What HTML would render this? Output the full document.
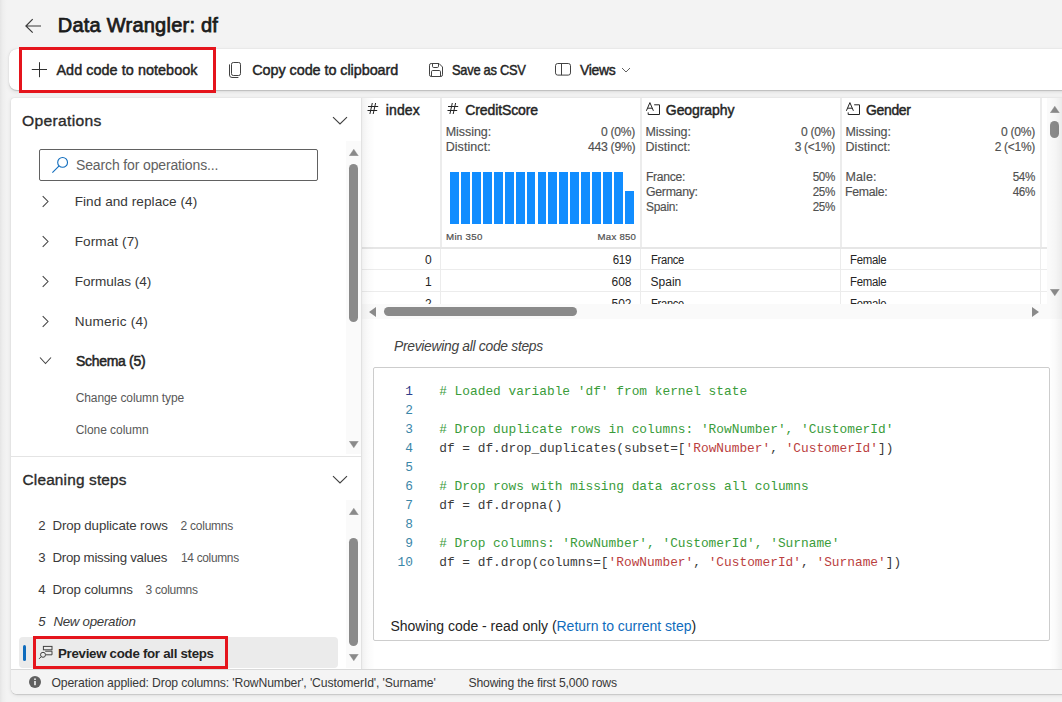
<!DOCTYPE html>
<html><head><meta charset="utf-8"><style>
html,body{margin:0;padding:0}
body{width:1062px;height:702px;overflow:hidden;position:relative;background:#f3f3f3;font-family:"Liberation Sans",sans-serif}
.t{position:absolute;white-space:pre;line-height:1}
</style></head><body>
<div style="position:absolute;left:0px;top:0px;width:7px;height:702px;background:linear-gradient(90deg,rgba(0,0,0,0.06),rgba(0,0,0,0.02) 40%,rgba(0,0,0,0))"></div>
<svg style="position:absolute;left:24px;top:17px" width="18" height="18" viewBox="0 0 18 18"><path d="M2 9H17M8.7 2.2L1.9 9L8.7 15.6" fill="none" stroke="#3a3a3a" stroke-width="1.2"/></svg>
<div class="t" style="left:57.77px;top:15.27px;font-size:20px;font-weight:400;font-style:normal;color:#1b1b1b;font-family:'Liberation Sans',sans-serif;letter-spacing:0.234px;-webkit-text-stroke:0.75px #1b1b1b;">Data Wrangler: df</div>
<div style="position:absolute;left:9px;top:49px;width:1071px;height:41px;background:#fff;border-radius:8px;box-shadow:0 0.5px 1px rgba(0,0,0,0.16),0 1.5px 4px rgba(0,0,0,0.09),0 0 1px rgba(0,0,0,0.06)"></div>
<svg style="position:absolute;left:31px;top:62px" width="16" height="16" viewBox="0 0 16 16"><path d="M8.5 0.2V15.2M0.8 7.5H16" stroke="#303030" stroke-width="1" fill="none"/></svg>
<div class="t" style="left:56.43px;top:62.81px;font-size:14.4px;font-weight:400;font-style:normal;color:#242424;font-family:'Liberation Sans',sans-serif;letter-spacing:0.054px;-webkit-text-stroke:0.45px #242424;">Add code to notebook</div>
<svg style="position:absolute;left:228px;top:61px" width="16" height="18" viewBox="0 0 16 18"><rect x="3.5" y="1.5" width="9" height="13" rx="1.8" fill="none" stroke="#424242" stroke-width="1"/><path d="M1.5 3.4V14Q1.5 16.5 4 16.5H10.4" fill="none" stroke="#424242" stroke-width="1"/></svg>
<div class="t" style="left:252.22px;top:62.81px;font-size:14.4px;font-weight:400;font-style:normal;color:#242424;font-family:'Liberation Sans',sans-serif;letter-spacing:-0.054px;-webkit-text-stroke:0.45px #242424;">Copy code to clipboard</div>
<svg style="position:absolute;left:428px;top:62px" width="16" height="16" viewBox="0 0 16 16"><path d="M3.2 1.5H11L14.5 5V12.8Q14.5 14.5 12.8 14.5H3.2Q1.5 14.5 1.5 12.8V3.2Q1.5 1.5 3.2 1.5Z" fill="none" stroke="#424242" stroke-width="1"/><path d="M4.5 1.5V4.3Q4.5 5.5 5.7 5.5H9.3Q10.5 5.5 10.5 4.3V1.5" fill="none" stroke="#424242" stroke-width="1"/><path d="M3.5 14.5V9.7Q3.5 8.5 4.7 8.5H11.3Q12.5 8.5 12.5 9.7V14.5" fill="none" stroke="#424242" stroke-width="1"/></svg>
<div class="t" style="left:452.20px;top:62.81px;font-size:14.4px;font-weight:400;font-style:normal;color:#242424;font-family:'Liberation Sans',sans-serif;letter-spacing:-0.300px;-webkit-text-stroke:0.45px #242424;transform:scaleX(0.8953);transform-origin:0 0;">Save as CSV</div>
<svg style="position:absolute;left:554px;top:62px" width="18" height="15" viewBox="0 0 18 15"><rect x="1.5" y="1.5" width="15" height="11.6" rx="2.2" fill="none" stroke="#424242" stroke-width="1"/><path d="M7.5 1.5V13.1" stroke="#424242" stroke-width="1"/></svg>
<div class="t" style="left:579.92px;top:62.81px;font-size:14.4px;font-weight:400;font-style:normal;color:#242424;font-family:'Liberation Sans',sans-serif;letter-spacing:-0.300px;-webkit-text-stroke:0.45px #242424;transform:scaleX(0.9682);transform-origin:0 0;">Views</div>
<svg style="position:absolute;left:621px;top:67px" width="10" height="6" viewBox="0 0 10 6"><path d="M1 1L5 5L9 1" fill="none" stroke="#616161" stroke-width="1"/></svg>
<div style="position:absolute;left:19px;top:47px;width:197px;height:46px;border:3px solid #e5141c;box-sizing:border-box"></div>
<div style="position:absolute;left:11px;top:98px;width:1069px;height:596px;background:#fff;border-radius:3px 3px 6px 6px;box-shadow:0 0.5px 1px rgba(0,0,0,0.12),0 1px 4px rgba(0,0,0,0.10),0 0 1px rgba(0,0,0,0.08)"></div>
<div class="t" style="left:22.18px;top:113.26px;font-size:15.4px;font-weight:400;font-style:normal;color:#2b2b2b;font-family:'Liberation Sans',sans-serif;letter-spacing:0.300px;-webkit-text-stroke:0.35px #2b2b2b;transform:scaleX(1.0173);transform-origin:0 0;">Operations</div>
<svg style="position:absolute;left:332px;top:115px" width="16" height="11" viewBox="0 0 16 11"><path d="M1 2.2L8 9L15 2.2" fill="none" stroke="#424242" stroke-width="1.15"/></svg>
<div style="position:absolute;left:39px;top:149px;width:279px;height:32px;border:1px solid #616161;border-radius:2px;box-sizing:border-box;background:#fff"></div>
<svg style="position:absolute;left:51px;top:156px" width="18" height="18" viewBox="0 0 18 18"><circle cx="11.6" cy="6.4" r="4.9" fill="none" stroke="#0f6cbd" stroke-width="1.1"/><path d="M8.1 9.9L1.4 16.6" stroke="#0f6cbd" stroke-width="1.1"/></svg>
<div class="t" style="left:76.00px;top:158.45px;font-size:14px;font-weight:400;font-style:normal;color:#616161;font-family:'Liberation Sans',sans-serif;letter-spacing:-0.136px;">Search for operations...</div>
<svg style="position:absolute;left:41px;top:195.2px" width="9" height="13" viewBox="0 0 9 13"><path d="M1.7 1.2L7 6.5L1.7 11.8" fill="none" stroke="#424242" stroke-width="1.05"/></svg>
<div class="t" style="left:74.70px;top:194.89px;font-size:13.6px;font-weight:400;font-style:normal;color:#383838;font-family:'Liberation Sans',sans-serif;letter-spacing:0.046px;">Find and replace (4)</div>
<svg style="position:absolute;left:41px;top:235.2px" width="9" height="13" viewBox="0 0 9 13"><path d="M1.7 1.2L7 6.5L1.7 11.8" fill="none" stroke="#424242" stroke-width="1.05"/></svg>
<div class="t" style="left:74.70px;top:234.89px;font-size:13.6px;font-weight:400;font-style:normal;color:#383838;font-family:'Liberation Sans',sans-serif;letter-spacing:0.076px;">Format (7)</div>
<svg style="position:absolute;left:41px;top:275.2px" width="9" height="13" viewBox="0 0 9 13"><path d="M1.7 1.2L7 6.5L1.7 11.8" fill="none" stroke="#424242" stroke-width="1.05"/></svg>
<div class="t" style="left:74.70px;top:274.89px;font-size:13.6px;font-weight:400;font-style:normal;color:#383838;font-family:'Liberation Sans',sans-serif;letter-spacing:-0.047px;">Formulas (4)</div>
<svg style="position:absolute;left:41px;top:315.2px" width="9" height="13" viewBox="0 0 9 13"><path d="M1.7 1.2L7 6.5L1.7 11.8" fill="none" stroke="#424242" stroke-width="1.05"/></svg>
<div class="t" style="left:74.70px;top:314.89px;font-size:13.6px;font-weight:400;font-style:normal;color:#383838;font-family:'Liberation Sans',sans-serif;letter-spacing:0.203px;">Numeric (4)</div>
<svg style="position:absolute;left:39px;top:356px" width="13" height="9" viewBox="0 0 13 9"><path d="M1 1.5L6.5 7.5L12 1.5" fill="none" stroke="#424242" stroke-width="1.1"/></svg>
<div class="t" style="left:75.95px;top:354.25px;font-size:14px;font-weight:400;font-style:normal;color:#242424;font-family:'Liberation Sans',sans-serif;letter-spacing:-0.300px;-webkit-text-stroke:0.5px #242424;transform:scaleX(0.9986);transform-origin:0 0;">Schema (5)</div>
<div class="t" style="left:75.70px;top:392.04px;font-size:12px;font-weight:400;font-style:normal;color:#585858;font-family:'Liberation Sans',sans-serif;letter-spacing:-0.088px;">Change column type</div>
<div class="t" style="left:75.70px;top:424.04px;font-size:12px;font-weight:400;font-style:normal;color:#585858;font-family:'Liberation Sans',sans-serif;letter-spacing:-0.045px;">Clone column</div>
<div style="position:absolute;left:346px;top:141px;width:15px;height:313px;background:#fafafa"></div>
<svg style="position:absolute;left:349px;top:149px" width="10" height="7" viewBox="0 0 10 7"><path d="M0.3 6.8L4.8 0.2L9.3 6.8Z" fill="#8a8a8a" stroke="#8a8a8a" stroke-width="0.4" stroke-linejoin="round"/></svg>
<div style="position:absolute;left:349px;top:164px;width:9px;height:158px;background:#8a8a8a;border-radius:5px"></div>
<svg style="position:absolute;left:349px;top:441px" width="10" height="7" viewBox="0 0 10 7"><path d="M0.3 0.2L4.8 6.8L9.3 0.2Z" fill="#8a8a8a" stroke="#8a8a8a" stroke-width="0.4" stroke-linejoin="round"/></svg>
<div style="position:absolute;left:11px;top:456px;width:350px;height:1px;background:#e4e4e4"></div>
<div class="t" style="left:22.57px;top:471.86px;font-size:15.4px;font-weight:400;font-style:normal;color:#2b2b2b;font-family:'Liberation Sans',sans-serif;letter-spacing:0.164px;-webkit-text-stroke:0.35px #2b2b2b;">Cleaning steps</div>
<svg style="position:absolute;left:332px;top:474px" width="16" height="11" viewBox="0 0 16 11"><path d="M1 2.2L8 9L15 2.2" fill="none" stroke="#424242" stroke-width="1.15"/></svg>
<div class="t" style="left:38.20px;top:519.43px;font-size:13.2px;font-weight:400;font-style:normal;color:#3a3a3a;font-family:'Liberation Sans',sans-serif;">2</div>
<div class="t" style="left:52.40px;top:519.34px;font-size:13.3px;font-weight:400;font-style:normal;color:#3a3a3a;font-family:'Liberation Sans',sans-serif;letter-spacing:-0.115px;">Drop duplicate rows</div>
<div class="t" style="left:180.60px;top:520.44px;font-size:12px;font-weight:400;font-style:normal;color:#585858;font-family:'Liberation Sans',sans-serif;letter-spacing:-0.249px;">2 columns</div>
<div class="t" style="left:38.20px;top:550.93px;font-size:13.2px;font-weight:400;font-style:normal;color:#3a3a3a;font-family:'Liberation Sans',sans-serif;">3</div>
<div class="t" style="left:52.40px;top:550.84px;font-size:13.3px;font-weight:400;font-style:normal;color:#3a3a3a;font-family:'Liberation Sans',sans-serif;letter-spacing:-0.265px;">Drop missing values</div>
<div class="t" style="left:180.60px;top:551.94px;font-size:12px;font-weight:400;font-style:normal;color:#585858;font-family:'Liberation Sans',sans-serif;letter-spacing:-0.300px;transform:scaleX(0.9904);transform-origin:0 0;">14 columns</div>
<div class="t" style="left:38.20px;top:583.03px;font-size:13.2px;font-weight:400;font-style:normal;color:#3a3a3a;font-family:'Liberation Sans',sans-serif;">4</div>
<div class="t" style="left:52.40px;top:582.94px;font-size:13.3px;font-weight:400;font-style:normal;color:#3a3a3a;font-family:'Liberation Sans',sans-serif;letter-spacing:-0.144px;">Drop columns</div>
<div class="t" style="left:145.60px;top:584.04px;font-size:12px;font-weight:400;font-style:normal;color:#585858;font-family:'Liberation Sans',sans-serif;letter-spacing:-0.286px;">3 columns</div>
<div class="t" style="left:38.20px;top:614.73px;font-size:13.2px;font-weight:400;font-style:italic;color:#3a3a3a;font-family:'Liberation Sans',sans-serif;">5</div>
<div class="t" style="left:53.40px;top:614.64px;font-size:13.3px;font-weight:400;font-style:italic;color:#3a3a3a;font-family:'Liberation Sans',sans-serif;letter-spacing:-0.279px;">New operation</div>
<div style="position:absolute;left:346px;top:500px;width:15px;height:168px;background:#fafafa"></div>
<svg style="position:absolute;left:349px;top:508px" width="10" height="7" viewBox="0 0 10 7"><path d="M0.3 6.8L4.8 0.2L9.3 6.8Z" fill="#8a8a8a" stroke="#8a8a8a" stroke-width="0.4" stroke-linejoin="round"/></svg>
<div style="position:absolute;left:349px;top:538px;width:9px;height:108px;background:#8a8a8a;border-radius:5px"></div>
<svg style="position:absolute;left:349px;top:654px" width="10" height="7" viewBox="0 0 10 7"><path d="M0.3 0.2L4.8 6.8L9.3 0.2Z" fill="#8a8a8a" stroke="#8a8a8a" stroke-width="0.4" stroke-linejoin="round"/></svg>
<div style="position:absolute;left:19px;top:637px;width:319px;height:31px;background:#ebebeb;border-radius:4px"></div>
<div style="position:absolute;left:23px;top:645px;width:3px;height:16px;background:#0f6cbd;border-radius:2px"></div>
<svg style="position:absolute;left:38px;top:645px" width="16" height="16" viewBox="0 0 16 16"><rect x="5.4" y="1.4" width="8.6" height="3.4" fill="none" stroke="#424242" stroke-width="1"/><path d="M7.2 6.2H14V9.8H7.8" fill="none" stroke="#424242" stroke-width="1"/><circle cx="5" cy="9.8" r="2.5" fill="#ebebeb" stroke="#424242" stroke-width="1"/><path d="M3.3 11.6L1 13.9" stroke="#424242" stroke-width="1"/></svg>
<div class="t" style="left:57.50px;top:646.57px;font-size:13.5px;font-weight:700;font-style:normal;color:#242424;font-family:'Liberation Sans',sans-serif;letter-spacing:-0.300px;transform:scaleX(0.9854);transform-origin:0 0;">Preview code for all steps</div>
<div style="position:absolute;left:33px;top:636px;width:195px;height:33px;border:3px solid #e5141c;box-sizing:border-box"></div>
<div style="position:absolute;left:11px;top:669px;width:1069px;height:25px;background:#f4f4f4;border-top:1px solid #d9d9d9;box-sizing:border-box;border-radius:0 0 6px 6px"></div>
<svg style="position:absolute;left:28px;top:675px" width="14" height="14" viewBox="0 0 14 14"><circle cx="7" cy="7" r="6" fill="#616161"/><rect x="6.2" y="6" width="1.6" height="4.2" fill="#f4f4f4"/><circle cx="7" cy="4.2" r="0.9" fill="#f4f4f4"/></svg>
<div class="t" style="left:51.40px;top:676.77px;font-size:12.2px;font-weight:400;font-style:normal;color:#383838;font-family:'Liberation Sans',sans-serif;letter-spacing:-0.122px;">Operation applied: Drop columns: &#x27;RowNumber&#x27;, &#x27;CustomerId&#x27;, &#x27;Surname&#x27;</div>
<div class="t" style="left:468.50px;top:676.77px;font-size:12.2px;font-weight:400;font-style:normal;color:#383838;font-family:'Liberation Sans',sans-serif;letter-spacing:-0.167px;">Showing the first 5,000 rows</div>
<div style="position:absolute;left:362px;top:247px;width:685px;height:2px;background:#e6e6e6"></div>
<div style="position:absolute;left:440px;top:98px;width:2px;height:149px;background:#ececec"></div>
<div style="position:absolute;left:440px;top:249px;width:1px;height:55px;background:#ececec"></div>
<div style="position:absolute;left:640px;top:98px;width:2px;height:149px;background:#ececec"></div>
<div style="position:absolute;left:640px;top:249px;width:1px;height:55px;background:#ececec"></div>
<div style="position:absolute;left:840px;top:98px;width:2px;height:149px;background:#ececec"></div>
<div style="position:absolute;left:840px;top:249px;width:1px;height:55px;background:#ececec"></div>
<div style="position:absolute;left:1040px;top:98px;width:2px;height:149px;background:#ececec"></div>
<div style="position:absolute;left:1040px;top:249px;width:1px;height:55px;background:#ececec"></div>
<div style="position:absolute;left:362px;top:269px;width:685px;height:1px;background:#ececec"></div>
<div style="position:absolute;left:362px;top:291px;width:685px;height:1px;background:#ececec"></div>
<svg style="position:absolute;left:367px;top:102px" width="12" height="13" viewBox="0 0 12 13"><path d="M5.3 1L2.9 12M8.6 1L6.2 12M1 4.5H11.2M0.5 8.5H10.2" fill="none" stroke="#242424" stroke-width="1"/></svg>
<div class="t" style="left:385.73px;top:102.65px;font-size:14px;font-weight:400;font-style:normal;color:#242424;font-family:'Liberation Sans',sans-serif;letter-spacing:0.145px;-webkit-text-stroke:0.45px #242424;">index</div>
<svg style="position:absolute;left:446.5px;top:102px" width="12" height="13" viewBox="0 0 12 13"><path d="M5.3 1L2.9 12M8.6 1L6.2 12M1 4.5H11.2M0.5 8.5H10.2" fill="none" stroke="#242424" stroke-width="1"/></svg>
<div class="t" style="left:465.23px;top:102.65px;font-size:14px;font-weight:400;font-style:normal;color:#242424;font-family:'Liberation Sans',sans-serif;letter-spacing:-0.108px;-webkit-text-stroke:0.45px #242424;">CreditScore</div>
<svg style="position:absolute;left:646px;top:102px" width="15" height="14" viewBox="0 0 15 14"><path d="M0.4 8.8L3.9 0.6L7.4 8.8M1.6 6.2H6.2" fill="none" stroke="#242424" stroke-width="1"/><path d="M8.2 2.8H13.5V12.5H2.2V10.4" fill="none" stroke="#242424" stroke-width="1"/></svg>
<div class="t" style="left:665.83px;top:102.65px;font-size:14px;font-weight:400;font-style:normal;color:#242424;font-family:'Liberation Sans',sans-serif;letter-spacing:-0.077px;-webkit-text-stroke:0.45px #242424;">Geography</div>
<svg style="position:absolute;left:846px;top:102px" width="15" height="14" viewBox="0 0 15 14"><path d="M0.4 8.8L3.9 0.6L7.4 8.8M1.6 6.2H6.2" fill="none" stroke="#242424" stroke-width="1"/><path d="M8.2 2.8H13.5V12.5H2.2V10.4" fill="none" stroke="#242424" stroke-width="1"/></svg>
<div class="t" style="left:865.82px;top:102.65px;font-size:14px;font-weight:400;font-style:normal;color:#242424;font-family:'Liberation Sans',sans-serif;letter-spacing:-0.300px;-webkit-text-stroke:0.45px #242424;transform:scaleX(0.9938);transform-origin:0 0;">Gender</div>
<div class="t" style="left:445.68px;top:126.42px;font-size:12.5px;font-weight:400;font-style:normal;color:#505050;font-family:'Liberation Sans',sans-serif;letter-spacing:-0.046px;-webkit-text-stroke:0.15px #505050;">Missing:</div>
<div class="t" style="right:426.71px;top:126.42px;font-size:12.5px;font-weight:400;font-style:normal;color:#505050;font-family:'Liberation Sans',sans-serif;letter-spacing:-0.300px;-webkit-text-stroke:0.15px #505050;transform:scaleX(0.9687);transform-origin:100% 0;">0 (0%)</div>
<div class="t" style="left:445.68px;top:140.82px;font-size:12.5px;font-weight:400;font-style:normal;color:#505050;font-family:'Liberation Sans',sans-serif;letter-spacing:0.071px;-webkit-text-stroke:0.15px #505050;">Distinct:</div>
<div class="t" style="right:426.71px;top:140.82px;font-size:12.5px;font-weight:400;font-style:normal;color:#505050;font-family:'Liberation Sans',sans-serif;letter-spacing:-0.300px;-webkit-text-stroke:0.15px #505050;transform:scaleX(0.9813);transform-origin:100% 0;">443 (9%)</div>
<div class="t" style="left:645.48px;top:126.42px;font-size:12.5px;font-weight:400;font-style:normal;color:#505050;font-family:'Liberation Sans',sans-serif;letter-spacing:-0.046px;-webkit-text-stroke:0.15px #505050;">Missing:</div>
<div class="t" style="right:226.71px;top:126.42px;font-size:12.5px;font-weight:400;font-style:normal;color:#505050;font-family:'Liberation Sans',sans-serif;letter-spacing:-0.300px;-webkit-text-stroke:0.15px #505050;transform:scaleX(0.9687);transform-origin:100% 0;">0 (0%)</div>
<div class="t" style="left:645.48px;top:140.82px;font-size:12.5px;font-weight:400;font-style:normal;color:#505050;font-family:'Liberation Sans',sans-serif;letter-spacing:0.071px;-webkit-text-stroke:0.15px #505050;">Distinct:</div>
<div class="t" style="right:226.70px;top:140.82px;font-size:12.5px;font-weight:400;font-style:normal;color:#505050;font-family:'Liberation Sans',sans-serif;letter-spacing:-0.300px;-webkit-text-stroke:0.15px #505050;transform:scaleX(0.9597);transform-origin:100% 0;">3 (&lt;1%)</div>
<div class="t" style="left:645.50px;top:170.72px;font-size:12.5px;font-weight:400;font-style:normal;color:#505050;font-family:'Liberation Sans',sans-serif;letter-spacing:-0.300px;-webkit-text-stroke:0.15px #505050;transform:scaleX(0.9681);transform-origin:0 0;">France:</div>
<div class="t" style="right:226.74px;top:170.72px;font-size:12.5px;font-weight:400;font-style:normal;color:#505050;font-family:'Liberation Sans',sans-serif;letter-spacing:-0.300px;-webkit-text-stroke:0.15px #505050;transform:scaleX(0.9324);transform-origin:100% 0;">50%</div>
<div class="t" style="left:646.47px;top:185.62px;font-size:12.5px;font-weight:400;font-style:normal;color:#505050;font-family:'Liberation Sans',sans-serif;letter-spacing:-0.300px;-webkit-text-stroke:0.15px #505050;transform:scaleX(0.9856);transform-origin:0 0;">Germany:</div>
<div class="t" style="right:226.74px;top:185.62px;font-size:12.5px;font-weight:400;font-style:normal;color:#505050;font-family:'Liberation Sans',sans-serif;letter-spacing:-0.300px;-webkit-text-stroke:0.15px #505050;transform:scaleX(0.9324);transform-origin:100% 0;">25%</div>
<div class="t" style="left:646.47px;top:200.62px;font-size:12.5px;font-weight:400;font-style:normal;color:#505050;font-family:'Liberation Sans',sans-serif;letter-spacing:-0.300px;-webkit-text-stroke:0.15px #505050;transform:scaleX(0.9548);transform-origin:0 0;">Spain:</div>
<div class="t" style="right:226.74px;top:200.62px;font-size:12.5px;font-weight:400;font-style:normal;color:#505050;font-family:'Liberation Sans',sans-serif;letter-spacing:-0.300px;-webkit-text-stroke:0.15px #505050;transform:scaleX(0.9324);transform-origin:100% 0;">25%</div>
<div class="t" style="left:845.48px;top:126.42px;font-size:12.5px;font-weight:400;font-style:normal;color:#505050;font-family:'Liberation Sans',sans-serif;letter-spacing:-0.046px;-webkit-text-stroke:0.15px #505050;">Missing:</div>
<div class="t" style="right:26.91px;top:126.42px;font-size:12.5px;font-weight:400;font-style:normal;color:#505050;font-family:'Liberation Sans',sans-serif;letter-spacing:-0.300px;-webkit-text-stroke:0.15px #505050;transform:scaleX(0.9687);transform-origin:100% 0;">0 (0%)</div>
<div class="t" style="left:845.48px;top:140.82px;font-size:12.5px;font-weight:400;font-style:normal;color:#505050;font-family:'Liberation Sans',sans-serif;letter-spacing:0.071px;-webkit-text-stroke:0.15px #505050;">Distinct:</div>
<div class="t" style="right:26.90px;top:140.82px;font-size:12.5px;font-weight:400;font-style:normal;color:#505050;font-family:'Liberation Sans',sans-serif;letter-spacing:-0.300px;-webkit-text-stroke:0.15px #505050;transform:scaleX(0.9597);transform-origin:100% 0;">2 (&lt;1%)</div>
<div class="t" style="left:845.48px;top:170.72px;font-size:12.5px;font-weight:400;font-style:normal;color:#505050;font-family:'Liberation Sans',sans-serif;letter-spacing:0.089px;-webkit-text-stroke:0.15px #505050;">Male:</div>
<div class="t" style="right:26.94px;top:170.72px;font-size:12.5px;font-weight:400;font-style:normal;color:#505050;font-family:'Liberation Sans',sans-serif;letter-spacing:-0.300px;-webkit-text-stroke:0.15px #505050;transform:scaleX(0.9324);transform-origin:100% 0;">54%</div>
<div class="t" style="left:845.49px;top:185.62px;font-size:12.5px;font-weight:400;font-style:normal;color:#505050;font-family:'Liberation Sans',sans-serif;letter-spacing:-0.300px;-webkit-text-stroke:0.15px #505050;transform:scaleX(0.9826);transform-origin:0 0;">Female:</div>
<div class="t" style="right:26.94px;top:185.62px;font-size:12.5px;font-weight:400;font-style:normal;color:#505050;font-family:'Liberation Sans',sans-serif;letter-spacing:-0.300px;-webkit-text-stroke:0.15px #505050;transform:scaleX(0.9324);transform-origin:100% 0;">46%</div>
<div style="position:absolute;left:450.00px;top:172px;width:8.9px;height:52px;background:#118dff"></div>
<div style="position:absolute;left:460.94px;top:172px;width:8.9px;height:52px;background:#118dff"></div>
<div style="position:absolute;left:471.88px;top:172px;width:8.9px;height:52px;background:#118dff"></div>
<div style="position:absolute;left:482.82px;top:172px;width:8.9px;height:52px;background:#118dff"></div>
<div style="position:absolute;left:493.76px;top:172px;width:8.9px;height:52px;background:#118dff"></div>
<div style="position:absolute;left:504.70px;top:172px;width:8.9px;height:52px;background:#118dff"></div>
<div style="position:absolute;left:515.64px;top:172px;width:8.9px;height:52px;background:#118dff"></div>
<div style="position:absolute;left:526.58px;top:172px;width:8.9px;height:52px;background:#118dff"></div>
<div style="position:absolute;left:537.52px;top:172px;width:8.9px;height:52px;background:#118dff"></div>
<div style="position:absolute;left:548.46px;top:172px;width:8.9px;height:52px;background:#118dff"></div>
<div style="position:absolute;left:559.40px;top:172px;width:8.9px;height:52px;background:#118dff"></div>
<div style="position:absolute;left:570.34px;top:172px;width:8.9px;height:52px;background:#118dff"></div>
<div style="position:absolute;left:581.28px;top:172px;width:8.9px;height:52px;background:#118dff"></div>
<div style="position:absolute;left:592.22px;top:172px;width:8.9px;height:52px;background:#118dff"></div>
<div style="position:absolute;left:603.16px;top:172px;width:8.9px;height:52px;background:#118dff"></div>
<div style="position:absolute;left:614.10px;top:172px;width:8.9px;height:52px;background:#118dff"></div>
<div style="position:absolute;left:625.04px;top:191px;width:8.9px;height:33px;background:#118dff"></div>
<div class="t" style="left:446.40px;top:232.07px;font-size:9.6px;font-weight:400;font-style:normal;color:#505050;font-family:'Liberation Sans',sans-serif;letter-spacing:0.300px;-webkit-text-stroke:0.2px #505050;transform:scaleX(1.0141);transform-origin:0 0;">Min 350</div>
<div class="t" style="right:425.81px;top:232.07px;font-size:9.6px;font-weight:400;font-style:normal;color:#505050;font-family:'Liberation Sans',sans-serif;letter-spacing:0.257px;-webkit-text-stroke:0.2px #505050;">Max 850</div>
<div style="position:absolute;left:0;top:249px;width:1047px;height:55px;overflow:hidden"><div style="position:absolute;left:0;top:-249px;width:1062px;height:702px">
<div class="t" style="right:630.33px;top:254.04px;font-size:12px;font-weight:400;font-style:normal;color:#242424;font-family:'Liberation Sans',sans-serif;">0</div>
<div class="t" style="right:430.80px;top:254.04px;font-size:12px;font-weight:400;font-style:normal;color:#242424;font-family:'Liberation Sans',sans-serif;letter-spacing:-0.300px;transform:scaleX(0.9621);transform-origin:100% 0;">619</div>
<div class="t" style="left:650.60px;top:254.04px;font-size:12px;font-weight:400;font-style:normal;color:#242424;font-family:'Liberation Sans',sans-serif;letter-spacing:-0.300px;transform:scaleX(0.9288);transform-origin:0 0;">France</div>
<div class="t" style="left:850.30px;top:254.04px;font-size:12px;font-weight:400;font-style:normal;color:#242424;font-family:'Liberation Sans',sans-serif;letter-spacing:-0.300px;transform:scaleX(0.9501);transform-origin:0 0;">Female</div>
<div class="t" style="right:630.33px;top:275.84px;font-size:12px;font-weight:400;font-style:normal;color:#242424;font-family:'Liberation Sans',sans-serif;">1</div>
<div class="t" style="right:430.53px;top:275.84px;font-size:12px;font-weight:400;font-style:normal;color:#242424;font-family:'Liberation Sans',sans-serif;">608</div>
<div class="t" style="left:650.60px;top:275.84px;font-size:12px;font-weight:400;font-style:normal;color:#242424;font-family:'Liberation Sans',sans-serif;">Spain</div>
<div class="t" style="left:850.30px;top:275.84px;font-size:12px;font-weight:400;font-style:normal;color:#242424;font-family:'Liberation Sans',sans-serif;letter-spacing:-0.300px;transform:scaleX(0.9501);transform-origin:0 0;">Female</div>
<div class="t" style="right:630.33px;top:297.64px;font-size:12px;font-weight:400;font-style:normal;color:#242424;font-family:'Liberation Sans',sans-serif;">2</div>
<div class="t" style="right:430.53px;top:297.64px;font-size:12px;font-weight:400;font-style:normal;color:#242424;font-family:'Liberation Sans',sans-serif;">502</div>
<div class="t" style="left:650.60px;top:297.64px;font-size:12px;font-weight:400;font-style:normal;color:#242424;font-family:'Liberation Sans',sans-serif;letter-spacing:-0.300px;transform:scaleX(0.9288);transform-origin:0 0;">France</div>
<div class="t" style="left:850.30px;top:297.64px;font-size:12px;font-weight:400;font-style:normal;color:#242424;font-family:'Liberation Sans',sans-serif;letter-spacing:-0.300px;transform:scaleX(0.9501);transform-origin:0 0;">Female</div>
</div></div>
<div style="position:absolute;left:1047px;top:98px;width:15px;height:206px;background:#fafafa"></div>
<svg style="position:absolute;left:1050px;top:106px" width="10" height="7" viewBox="0 0 10 7"><path d="M0.3 6.8L4.8 0.2L9.3 6.8Z" fill="#8a8a8a" stroke="#8a8a8a" stroke-width="0.4" stroke-linejoin="round"/></svg>
<div style="position:absolute;left:1050px;top:121px;width:9px;height:17px;background:#8a8a8a;border-radius:5px"></div>
<svg style="position:absolute;left:1050px;top:289px" width="10" height="7" viewBox="0 0 10 7"><path d="M0.3 0.2L4.8 6.8L9.3 0.2Z" fill="#8a8a8a" stroke="#8a8a8a" stroke-width="0.4" stroke-linejoin="round"/></svg>
<div style="position:absolute;left:362px;top:304px;width:700px;height:15px;background:#fafafa"></div>
<svg style="position:absolute;left:369px;top:307px" width="7" height="10" viewBox="0 0 7 10"><path d="M7 0L0 5L7 10Z" fill="#8a8a8a"/></svg>
<div style="position:absolute;left:384px;top:307px;width:193px;height:9px;background:#8a8a8a;border-radius:5px"></div>
<svg style="position:absolute;left:1032px;top:307px" width="7" height="10" viewBox="0 0 7 10"><path d="M0 0L7 5L0 10Z" fill="#8a8a8a"/></svg>
<div class="t" style="left:393.50px;top:338.85px;font-size:14px;font-weight:400;font-style:italic;color:#424242;font-family:'Liberation Sans',sans-serif;letter-spacing:-0.300px;transform:scaleX(0.9896);transform-origin:0 0;">Previewing all code steps</div>
<div style="position:absolute;left:373px;top:367px;width:677px;height:274px;border:1px solid #cdcdcd;border-radius:2px;box-sizing:border-box;background:#fff"></div>
<div class="t" style="right:649px;top:385.64px;font-size:12.83px;color:#2e3f8a;font-family:'Liberation Mono',monospace">1</div>
<div class="t" style="left:439.2px;top:385.64px;font-size:12.83px;font-family:'Liberation Mono',monospace"><span style="color:#3a9c3a"># Loaded variable &#x27;df&#x27; from kernel state</span></div>
<div class="t" style="right:649px;top:404.64px;font-size:12.83px;color:#3a86a8;font-family:'Liberation Mono',monospace">2</div>
<div class="t" style="right:649px;top:423.64px;font-size:12.83px;color:#3a86a8;font-family:'Liberation Mono',monospace">3</div>
<div class="t" style="left:439.2px;top:423.64px;font-size:12.83px;font-family:'Liberation Mono',monospace"><span style="color:#3a9c3a"># Drop duplicate rows in columns: &#x27;RowNumber&#x27;, &#x27;CustomerId&#x27;</span></div>
<div class="t" style="right:649px;top:442.64px;font-size:12.83px;color:#3a86a8;font-family:'Liberation Mono',monospace">4</div>
<div class="t" style="left:439.2px;top:442.64px;font-size:12.83px;font-family:'Liberation Mono',monospace"><span style="color:#3b3b3b">df = df.drop_duplicates(subset=[</span><span style="color:#bb3f3f">&#x27;RowNumber&#x27;</span><span style="color:#3b3b3b">, </span><span style="color:#bb3f3f">&#x27;CustomerId&#x27;</span><span style="color:#3b3b3b">])</span></div>
<div class="t" style="right:649px;top:461.64px;font-size:12.83px;color:#3a86a8;font-family:'Liberation Mono',monospace">5</div>
<div class="t" style="right:649px;top:480.64px;font-size:12.83px;color:#3a86a8;font-family:'Liberation Mono',monospace">6</div>
<div class="t" style="left:439.2px;top:480.64px;font-size:12.83px;font-family:'Liberation Mono',monospace"><span style="color:#3a9c3a"># Drop rows with missing data across all columns</span></div>
<div class="t" style="right:649px;top:499.64px;font-size:12.83px;color:#3a86a8;font-family:'Liberation Mono',monospace">7</div>
<div class="t" style="left:439.2px;top:499.64px;font-size:12.83px;font-family:'Liberation Mono',monospace"><span style="color:#3b3b3b">df = df.dropna()</span></div>
<div class="t" style="right:649px;top:518.64px;font-size:12.83px;color:#3a86a8;font-family:'Liberation Mono',monospace">8</div>
<div class="t" style="right:649px;top:537.64px;font-size:12.83px;color:#3a86a8;font-family:'Liberation Mono',monospace">9</div>
<div class="t" style="left:439.2px;top:537.64px;font-size:12.83px;font-family:'Liberation Mono',monospace"><span style="color:#3a9c3a"># Drop columns: &#x27;RowNumber&#x27;, &#x27;CustomerId&#x27;, &#x27;Surname&#x27;</span></div>
<div class="t" style="right:649px;top:556.64px;font-size:12.83px;color:#3a86a8;font-family:'Liberation Mono',monospace">10</div>
<div class="t" style="left:439.2px;top:556.64px;font-size:12.83px;font-family:'Liberation Mono',monospace"><span style="color:#3b3b3b">df = df.drop(columns=[</span><span style="color:#bb3f3f">&#x27;RowNumber&#x27;</span><span style="color:#3b3b3b">, </span><span style="color:#bb3f3f">&#x27;CustomerId&#x27;</span><span style="color:#3b3b3b">, </span><span style="color:#bb3f3f">&#x27;Surname&#x27;</span><span style="color:#3b3b3b">])</span></div>
<div class="t" style="left:390.50px;top:618.75px;font-size:14px;font-weight:400;font-style:normal;color:#242424;font-family:'Liberation Sans',sans-serif;letter-spacing:-0.020px;">Showing code - read only (<span style="color:#0f6cbd">Return to current step</span>)</div>
<div style="position:absolute;left:361px;top:98px;width:14px;height:571px;background:linear-gradient(90deg,rgba(0,0,0,0.14),rgba(0,0,0,0.05) 12%,rgba(0,0,0,0.02) 50%,rgba(0,0,0,0) 100%)"></div>
<div style="position:absolute;left:1049px;top:98px;width:13px;height:571px;background:linear-gradient(270deg,rgba(0,0,0,0.06),rgba(0,0,0,0.02) 50%,rgba(0,0,0,0))"></div>
</body></html>
